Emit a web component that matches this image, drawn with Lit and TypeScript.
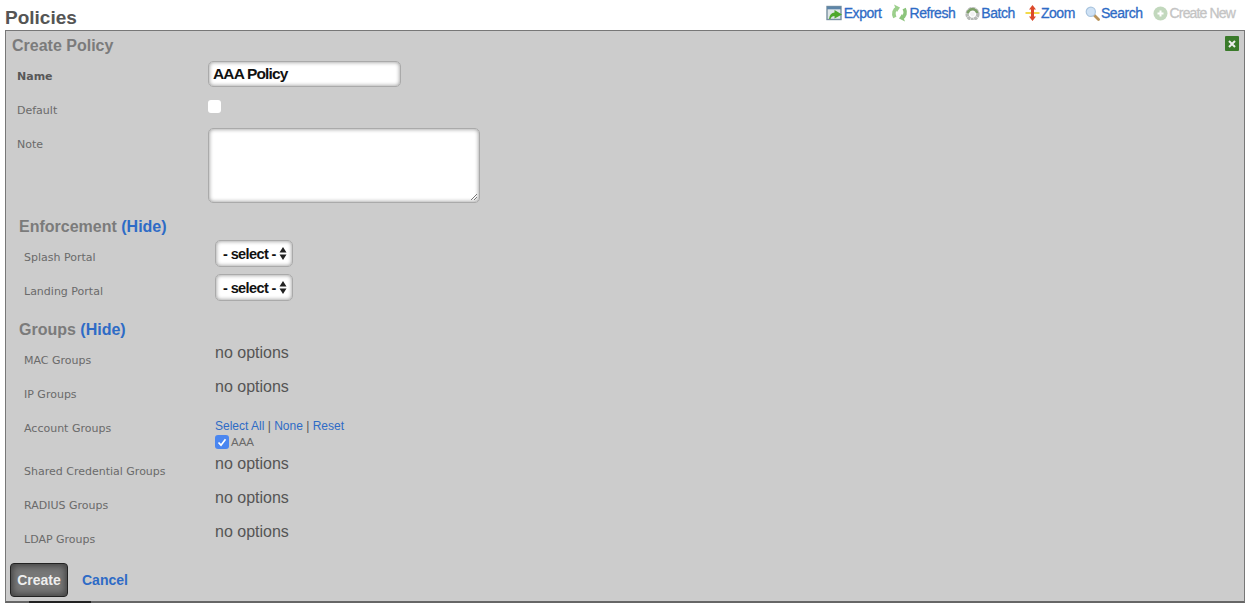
import { LitElement, html, css, svg } from "lit";
import { customElement } from "lit/decorators.js";

const icons: Record<string, unknown> = {
  export: svg`<svg width="17" height="16" viewBox="0 0 17 16"><rect x="1" y="1.5" width="14" height="13" fill="#dfe6e8" stroke="#7890a0" stroke-width="1.4"/><rect x="1" y="1.5" width="14" height="2.8" fill="#5d85a8"/><path d="M3 14 C3.5 10 5.5 8 8.5 7.6 L8.5 5 L16 9.4 L8.5 13.6 L8.5 11 C6.5 11 5 12 4.5 14 Z" fill="#4fa82c"/></svg>`,
  refresh: svg`<svg width="17" height="18" viewBox="0 0 17 18"><path d="M6.5 4 C3 5.5 1.8 9.5 3.8 13.5" fill="none" stroke="#9ccf8c" stroke-width="3.6"/><path d="M3 .6 L9 3.5 L6 8 Z" fill="#9ccf8c"/><path d="M10.5 14 C14 12.5 15.2 8.5 13.2 4.5" fill="none" stroke="#8cc47c" stroke-width="3.6"/><path d="M14 17.4 L8 14.5 L11 10 Z" fill="#8cc47c"/></svg>`,
  batch: svg`<svg width="15" height="14" viewBox="0 0 15 14"><circle cx="7.5" cy="8" r="5.4" fill="none" stroke="#b7bab7" stroke-width="3.4" stroke-dasharray="3 .5"/><circle cx="7.5" cy="8" r="2.4" fill="#f2f2f2"/><path d="M1.5 7.5 C2 3.5 5 2 7.5 2 C10.5 2 13 4 13.5 7 L11 7 C10 5 9 4.6 7.5 4.6 C6 4.6 4.5 5.5 4 7.5 Z" fill="#7da068"/></svg>`,
  zoom: svg`<svg width="15" height="18" viewBox="0 0 15 18"><path d="M0.5 9 H14.5" stroke="#f3da4b" stroke-width="2"/><path d="M7.5 1 L11 5.5 L9 5.5 L9 12.5 L11 12.5 L7.5 17 L4 12.5 L6 12.5 L6 5.5 L4 5.5 Z" fill="#dc4a2a"/></svg>`,
  search: svg`<svg width="15" height="15" viewBox="0 0 15 15"><path d="M8.5 8.5 L13.5 13.5" stroke="#b9935a" stroke-width="2.8" stroke-linecap="round"/><circle cx="5.8" cy="5.8" r="4.6" fill="#cfe2f5" stroke="#a9c4de" stroke-width="1.2"/></svg>`,
  create: svg`<svg width="15" height="15" viewBox="0 0 15 15"><circle cx="7.5" cy="7.5" r="7" fill="#c2d8bd"/><path d="M7.5 4.5 V10.5 M4.5 7.5 H10.5" stroke="#fff" stroke-width="2"/></svg>`,
};

const actions = [
  { key: "export", label: "Export", cls: "" },
  { key: "refresh", label: "Refresh", cls: "" },
  { key: "batch", label: "Batch", cls: "" },
  { key: "zoom", label: "Zoom", cls: "" },
  { key: "search", label: "Search", cls: "" },
  { key: "create", label: "Create New", cls: "off" },
];

@customElement("app-root")
export class AppRoot extends LitElement {
  static styles = css`
    :host { display: block; font-family: "Liberation Sans", Arial, sans-serif; background: #fff; height: 603px; overflow: hidden; }
    a { color: #2e6bc6; text-decoration: none; }
    .top { display: flex; justify-content: space-between; height: 30px; padding: 0 15px 0 5px; box-sizing: border-box; }
    h1 { margin: 8px 0 0; font-size: 19px; line-height: 20px; font-weight: bold; color: #555; }
    .actions { display: flex; gap: 10px; padding-top: 4px; height: 18px; align-items: center; }
    .action { display: flex; align-items: center; gap: 1px; font-size: 14px; letter-spacing: -0.45px; font-weight: 500; color: #2e6bc6; -webkit-text-stroke: 0.3px #2e6bc6; }
    .action.off { color: #c4c4c4; -webkit-text-stroke: 0.3px #c4c4c4; gap: 2px; letter-spacing: -0.85px; }
    .action svg { display: block; }
    .panel { position: relative; margin: 0 5px; height: 573px; box-sizing: border-box; background: #ccc; border: 1px solid #777; border-bottom-width: 2px; border-bottom-color: #666; padding: 6px 0 0 6px; }
    h2 { margin: 0; font-size: 16px; line-height: 18px; font-weight: bold; color: #7b7b7b; }
    .close { position: absolute; top: 5px; right: 5px; width: 14px; height: 15px; background: #3a7a2a; border-radius: 1px; display: flex; align-items: center; justify-content: center; }
    .close svg { display: block; }
    .row { display: grid; grid-template-columns: 191px 1fr; height: 34px; padding-left: 5px; }
    .form { margin-top: 3px; }
    .row.ind { grid-template-columns: 191px 1fr; padding-left: 12px; }
    .lab { font-family: "DejaVu Sans", Verdana, sans-serif; font-size: 11px; line-height: 14px; color: #6a6a6a; padding-top: 12px; white-space: nowrap; }
    .lab.b { font-weight: bold; color: #585858; }
    .input { width: 193px; height: 26px; margin-top: 3px; box-sizing: border-box; background: #fff; border: 1px solid #aaa; border-radius: 5px; box-shadow: inset 0 0 4px #8a8a8a; font-size: 15.5px; font-weight: bold; letter-spacing: -0.85px; line-height: 23px; padding-left: 4px; color: #111; }
    .check { width: 13px; height: 13px; margin-top: 8px; background: #fff; border-radius: 3px; }
    .note-row { height: 87px; }
    .area { position: relative; width: 272px; height: 75px; margin-top: 2px; box-sizing: border-box; background: #fff; border: 1px solid #aaa; border-radius: 5px; box-shadow: inset 0 0 4px #8a8a8a; }
    .grip { position: absolute; right: 1px; bottom: 1px; display: block; }
    h3 { margin: 0; padding-left: 7px; font-size: 16px; line-height: 20px; font-weight: bold; color: #7b7b7b; }
    h3 a { color: #2e6bc6; }
    .sec1 { margin-top: 4px; }
    .sec2 { margin-top: 13px; }
    .rows { margin-top: 2px; }
    .select { display: flex; align-items: center; gap: 3px; width: 78px; height: 27px; margin-top: 1px; padding-left: 7px; box-sizing: border-box; background: #fff; border: 1px solid #aaa; border-radius: 5px; box-shadow: inset 0 0 4px #8a8a8a; font-size: 14.5px; font-weight: bold; letter-spacing: -0.6px; color: #111; }
    .select svg { display: block; }
    .none { font-size: 16px; line-height: 18px; color: #555; padding-top: 2px; }
    .acc { height: 43px; }
    .links { font-size: 12px; line-height: 14px; color: #555; padding-top: 9px; }
    .opt { display: flex; align-items: center; gap: 2px; margin-top: 2px; font-size: 11.5px; line-height: 14px; color: #6a6a6a; }
    .box { width: 14px; height: 14px; border-radius: 3px; background: #4a86f0; display: flex; align-items: center; justify-content: center; }
    .foot { display: flex; align-items: center; gap: 14px; margin-top: 8px; margin-left: -2px; }
    .btn { width: 58px; height: 34px; box-sizing: border-box; border: 1px solid #222; border-radius: 4px; background: #777; box-shadow: inset 0 0 6px 2px #444; color: #eee; font-size: 14px; font-weight: bold; display: flex; align-items: center; justify-content: center; }
    .cancel { font-size: 14px; font-weight: bold; }
    .strip { position: absolute; left: 23px; bottom: -2px; width: 62px; height: 2px; background: #222; }
  `;

  private row(label: string, value: unknown) {
    return html`<div class="row ind"><div class="lab">${label}</div>${value}</div>`;
  }

  private select() {
    return html`<div class="select">- select -<svg width="8" height="15" viewBox="0 0 8 15"><path d="M4 1 L7.5 6.5 H.5 Z M4 14 L.5 8.5 H7.5 Z" fill="#222"/></svg></div>`;
  }

  render() {
    const none = html`<div class="none">no options</div>`;
    return html`
      <div class="top">
        <h1>Policies</h1>
        <div class="actions">
          ${actions.map((a) => html`<span class="action ${a.cls}">${icons[a.key]}<span>${a.label}</span></span>`)}
        </div>
      </div>
      <div class="panel">
        <h2>Create Policy</h2>
        <div class="close"><svg width="8" height="8" viewBox="0 0 8 8"><path d="M1 1 L7 7 M7 1 L1 7" stroke="#eee" stroke-width="2"/></svg></div>
        <div class="form">
          <div class="row"><div class="lab b">Name</div><div class="input">AAA Policy</div></div>
          <div class="row"><div class="lab">Default</div><div class="check"></div></div>
          <div class="row note-row"><div class="lab">Note</div>
            <div class="area"><svg class="grip" width="8" height="8" viewBox="0 0 8 8"><path d="M1 7 L7 1 M4 7 L7 4" stroke="#777" stroke-width="1"/></svg></div>
          </div>
        </div>
        <h3 class="sec1">Enforcement <a>(Hide)</a></h3>
        <div class="rows">
          ${this.row("Splash Portal", this.select())}
          ${this.row("Landing Portal", this.select())}
        </div>
        <h3 class="sec2">Groups <a>(Hide)</a></h3>
        <div class="rows">
          ${this.row("MAC Groups", none)}
          ${this.row("IP Groups", none)}
          <div class="row ind acc"><div class="lab">Account Groups</div>
            <div>
              <div class="links"><a>Select All</a> | <a>None</a> | <a>Reset</a></div>
              <div class="opt"><span class="box"><svg width="10" height="9" viewBox="0 0 10 9"><path d="M1.5 4.5 L4 7.2 L8.5 1.2" fill="none" stroke="#fff" stroke-width="1.7"/></svg></span>AAA</div>
            </div>
          </div>
          ${this.row("Shared Credential Groups", none)}
          ${this.row("RADIUS Groups", none)}
          ${this.row("LDAP Groups", none)}
        </div>
        <div class="foot"><div class="btn">Create</div><a class="cancel">Cancel</a></div>
        <div class="strip"></div>
      </div>
    `;
  }
}
